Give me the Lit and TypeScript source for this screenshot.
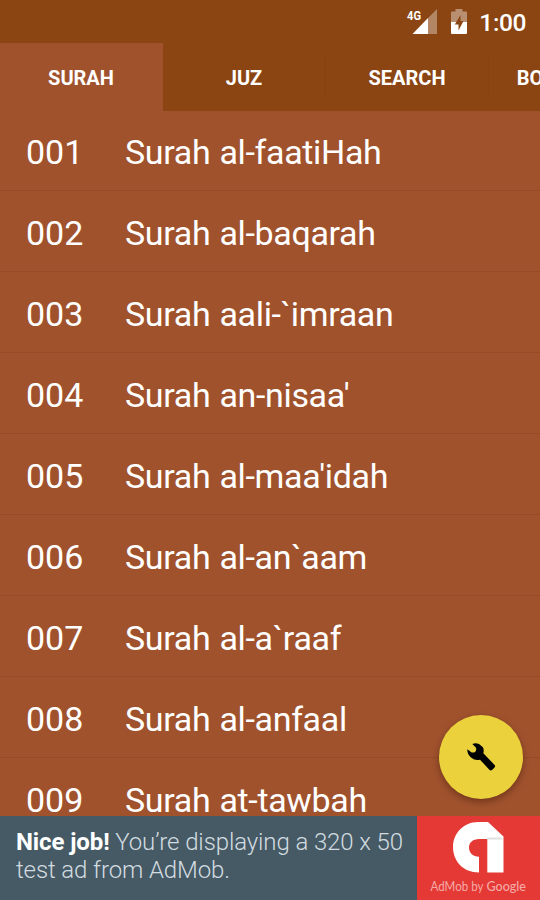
import { LitElement, html, css } from "lit";
import { customElement, property } from "lit/decorators.js";

const SURAHS = [
  "Surah al-faatiHah",
  "Surah al-baqarah",
  "Surah aali-`imraan",
  "Surah an-nisaa'",
  "Surah al-maa'idah",
  "Surah al-an`aam",
  "Surah al-a`raaf",
  "Surah al-anfaal",
  "Surah at-tawbah",
];

@customElement("status-bar")
class StatusBar extends LitElement {
  static styles = css`
    :host { display: flex; height: 43px; align-items: center; justify-content: flex-end; padding-right: 14px; box-sizing: border-box; color: #fff; }
    .signal { margin-right: 13px; }
    .battery { margin-right: 11px; }
    .net { font: 700 13px Roboto, sans-serif; }
    .time { font: 500 24.500px/28px Roboto, sans-serif; margin-top: 3px; letter-spacing: -0.400px; }
    .bolt { fill: #8b4513; }
    svg { display: block; }
  `;
  render() {
    return html`
      <svg class="signal" width="31" height="43" viewBox="0 0 31 43" fill="#fff">
        <path d="M31 9V34H22V18z" opacity=".35" />
        <path d="M22 18V34H6.500z" />
        <text class="net" x="1" y="19.500" textLength="14" lengthAdjust="spacingAndGlyphs">4G</text>
      </svg>
      <svg class="battery" width="18" height="43" viewBox="0 0 18 43" fill="#fff">
        <path d="M5.500 9H12.500v2.500h3.200c.8 0 1.300.5 1.300 1.300V22H1v-9.200c0-.8.5-1.300 1.300-1.300h3.200z" opacity=".4" />
        <path d="M1 22H17v10.700c0 .8-.5 1.300-1.300 1.300H2.300C1.500 34 1 33.500 1 32.700z" />
        <path class="bolt" d="M10.500 15L4.800 24.500H8.500V30.500L13.500 21H10.500z" />
      </svg>
      <span class="time">1:00</span>
    `;
  }
}

@customElement("tab-strip")
class TabStrip extends LitElement {
  static styles = css`
    :host { display: flex; height: 68px; overflow: hidden; font: 700 20px/24px Roboto, sans-serif; color: #fff; }
    .tab { flex: none; width: 163px; display: flex; align-items: center; justify-content: center; box-sizing: border-box; padding-top: 1px; }
    .active { background: #a0522d; padding-right: 1px; }
    .last { padding-left: 2px; }
    .divided { border-right: 1px solid; border-image: linear-gradient(transparent 20%, #854110 20%, #854110 80%, transparent 80%) 1; }
  `;
  render() {
    return html`
      <div class="tab active">SURAH</div>
      <div class="tab divided">JUZ</div>
      <div class="tab divided">SEARCH</div>
      <div class="tab last">BOOKMARK</div>
    `;
  }
}

@customElement("surah-row")
class SurahRow extends LitElement {
  @property({ type: Number }) number = 0;
  @property() name = "";
  static styles = css`
    :host { display: flex; flex: none; height: 81px; box-sizing: border-box; align-items: center; padding: 3px 0 0 26px; border-bottom: 1px solid #954b27; color: #fff; font: 400 34px/40px Roboto, sans-serif; white-space: nowrap; }
    :host(:first-child) { height: 80px; padding-top: 2px; }
    .number { width: 99px; }
    .name { letter-spacing: -0.340px; word-spacing: 1px; }
  `;
  render() {
    return html`<span class="number">${String(this.number).padStart(3, "0")}</span><span class="name">${this.name}</span>`;
  }
}

@customElement("ad-banner")
class AdBanner extends LitElement {
  static styles = css`
    :host { display: flex; height: 84px; background: #455a64; }
    .copy { flex: 1; padding: 12px 0 0 16px; font: 300 24px/28px Roboto, sans-serif; color: #d3dce1; white-space: nowrap; letter-spacing: -0.110px; }
    .copy b { font-weight: 700; color: #fff; }
    .line { display: block; }
    .brand { width: 123px; background: #e53935; }
    .brand svg { display: block; }
    .caption { font: 400 13px "Lato", sans-serif; fill: #f5aaa7; }
    .google { font-weight: 500; }
  `;
  render() {
    return html`
      <div class="copy">
        <span class="line"><b>Nice job!</b> You’re displaying a 320 x 50</span>
        <span class="line">test ad from AdMob.</span>
      </div>
      <div class="brand">
        <svg width="123" height="84" viewBox="0 0 123 84">
          <path fill="#fff" d="M62 56.500C46 56.500 36 45 36 31C36 17 47 6 61 6H71L86.500 20.500V56.500H70.300V23H62C56 23 52 26.500 52 31.500C52 37 56 40.700 62 40.700z" />
          <path fill="#e0e0e0" d="M70.300 21.500H84L86 23.500H70.300z" />
          <text class="caption" x="13.500" y="75" textLength="53" lengthAdjust="spacingAndGlyphs">AdMob by</text>
          <text class="caption google" x="69.500" y="75" textLength="39.500" lengthAdjust="spacingAndGlyphs">Google</text>
        </svg>
      </div>
    `;
  }
}

@customElement("app-root")
class AppRoot extends LitElement {
  static styles = css`
    :host { display: flex; flex-direction: column; position: relative; width: 540px; height: 900px; overflow: hidden; background: #8b4513; }
    .list { flex: 1; min-height: 0; overflow: hidden; display: flex; flex-direction: column; background: #a0522d; }
    .fab { position: absolute; right: 17px; bottom: 101px; width: 84px; height: 84px; padding: 0; border: 0; border-radius: 50%; background: #ebd13c; box-shadow: 0 3px 7px rgba(40, 15, 0, 0.4); display: flex; align-items: center; justify-content: center; }
  `;
  render() {
    return html`
      <status-bar></status-bar>
      <tab-strip></tab-strip>
      <div class="list">
        ${SURAHS.map((name, i) => html`<surah-row .number=${i + 1} .name=${name}></surah-row>`)}
      </div>
      <ad-banner></ad-banner>
      <button class="fab" aria-label="Settings">
        <svg width="42" height="42" viewBox="0 3 126 126">
          <path d="M37 27Q47 22 57 27L68 36Q73 42 70 55L104 90Q107 94 103 98L96 105Q92 108 88 104L60 74Q45 78 34 68Q21 59 22 43L34 52Q41 54 46 50Q50 46 48 38z" />
        </svg>
      </button>
    `;
  }
}
